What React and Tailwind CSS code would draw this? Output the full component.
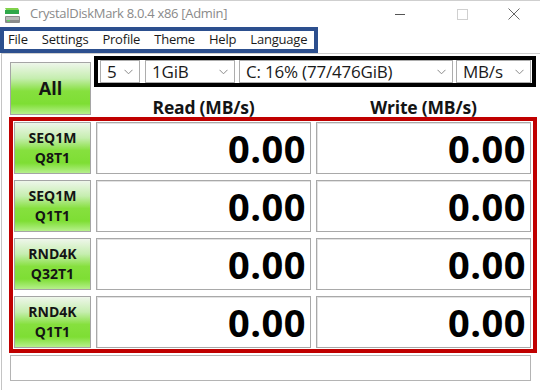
import React from "react";

const font = { fontFamily: '"Open Sans", "Noto Sans", sans-serif' };

const Chevron = () => (
  <svg width="9" height="6" viewBox="0 0 9 6" className="shrink-0">
    <path d="M0.5 0.8 L4.5 4.8 L8.5 0.8" fill="none" stroke="#8a8a8a" strokeWidth="1" />
  </svg>
);

const Select = ({ value, width }) => (
  <div
    className={`${width} h-[23px] bg-white border border-[#adadad] flex items-center justify-between pl-[6px] pr-[6px] text-[17px] text-[#1a1a1a]`}
  >
    <span className="leading-none tracking-[-0.2px]">{value}</span>
    <Chevron />
  </div>
);

const GreenButton = ({ children, className }) => (
  <div
    className={`${className} border border-[#a5a5a5] bg-[linear-gradient(to_bottom,#eef6ea_0%,#c6eeb0_30%,#86e03e_55%,#7ede34_80%,#b6f08c_100%)] flex flex-col items-center justify-center font-bold text-[#141414]`}
  >
    {children}
  </div>
);

const rows = [
  ["SEQ1M", "Q8T1"],
  ["SEQ1M", "Q1T1"],
  ["RND4K", "Q32T1"],
  ["RND4K", "Q1T1"],
];

const Cell = () => (
  <div className="w-[215px] h-full bg-white border border-[#a9a9a9] shadow-[inset_1px_1px_0_#e2e2e2] flex items-center justify-end pr-[4px]">
    <span className="text-[38px] font-bold leading-none text-black tracking-[0.5px]">0.00</span>
  </div>
);

export default function App() {
  return (
    <div className="w-[540px] h-[390px] bg-white overflow-hidden flex flex-col" style={font}>
      {/* title bar */}
      <div className="h-[27px] border-t border-[#cfcfcf] flex items-center shrink-0">
        <svg width="18" height="18" viewBox="0 0 18 18" className="ml-[3px] mt-[1px]">
          <path d="M2 2 H15 L16 4 H3 Z" fill="#7fd14a" />
          <rect x="2" y="4" width="14" height="4" fill="#2fa84a" />
          <rect x="2" y="10" width="15" height="7" rx="1" fill="#8c8c8c" />
          <rect x="3" y="11" width="13" height="3" fill="#b9b9b9" />
          <rect x="4" y="14" width="3" height="1.5" fill="#5fd35f" />
        </svg>
        <span className="ml-[9px] text-[13px] text-[#8a8a8a] tracking-[-0.3px]">
          CrystalDiskMark 8.0.4 x86 [Admin]
        </span>
        <div className="flex-1" />
        <div className="w-[10px] h-px bg-[#555] mr-[52px]" />
        <div className="w-[11px] h-[11px] border border-[#d0d0d0] mr-[40px]" />
        <svg width="12" height="12" viewBox="0 0 12 12" className="mr-[20px]">
          <path d="M0.5 0.5 L11.5 11.5 M11.5 0.5 L0.5 11.5" stroke="#666" strokeWidth="1" />
        </svg>
      </div>

      {/* menu */}
      <div className="w-[318px] h-[26px] border-[4px] border-[#2c4f8e] flex items-center text-[13px] text-[#1a1a1a] tracking-[-0.2px] shrink-0">
        <span className="ml-[4px]">File</span>
        <span className="ml-[14px]">Settings</span>
        <span className="ml-[14px]">Profile</span>
        <span className="ml-[14px]">Theme</span>
        <span className="ml-[14px]">Help</span>
        <span className="ml-[14px]">Language</span>
      </div>

      {/* client area */}
      <div className="flex-1 border-t border-[#cfcfcf] border-l border-l-[#c4c4c4] ml-px flex flex-col">
        <div className="flex h-[63px] shrink-0">
          <GreenButton className="ml-[8px] mt-[8px] w-[81px] h-[53px] text-[18px]">All</GreenButton>
          <div className="ml-[3px] mt-[2px] flex flex-col">
            <div className="w-[442px] h-[32px] border-[4px] border-black flex items-start pl-[2px] gap-[5px]">
              <Select value="5" width="w-[40px]" />
              <Select value="1GiB" width="w-[90px]" />
              <div className="-ml-px">
                <Select value="C: 16% (77/476GiB)" width="w-[214px]" />
              </div>
              <div className="-ml-[2px]">
                <Select value="MB/s" width="w-[75px]" />
              </div>
            </div>
            <div className="flex ml-[2px] mt-[9px] text-[17.5px] leading-[22px] font-bold text-[#141414] tracking-[-0.2px]">
              <div className="w-[215px] text-center">Read (MB/s)</div>
              <div className="w-[215px] ml-[5px] text-center">Write (MB/s)</div>
            </div>
          </div>
        </div>

        <div className="ml-[7px] w-[528px] border-[4px] border-[#c00000] flex flex-col gap-[6px] pt-px pb-px pl-px">
          {rows.map(([a, b], i) => (
            <div key={i} className="flex h-[52px] gap-[5px]">
              <GreenButton className="w-[77px] h-full text-[14px] leading-[20px]">
                <span>{a}</span>
                <span>{b}</span>
              </GreenButton>
              <Cell />
              <Cell />
            </div>
          ))}
        </div>

        <div className="ml-[8px] mt-[2px] w-[521px] h-[26px] bg-white border border-[#b4b4b4]" />
      </div>
    </div>
  );
}
